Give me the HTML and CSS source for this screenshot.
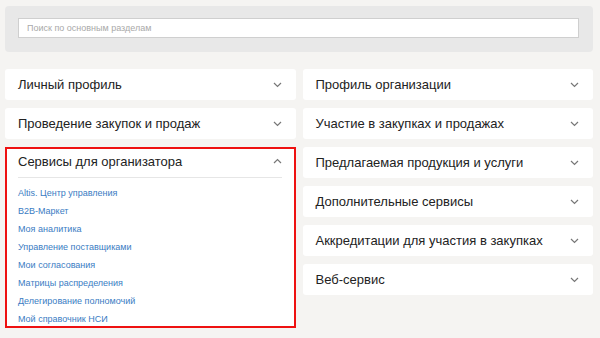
FILE: index.html
```html
<!DOCTYPE html>
<html lang="ru">
<head>
    <meta charset="UTF-8">
    <meta name="viewport" content="width=device-width, initial-scale=1.0">
    <title>Разделы</title>
    <link rel="stylesheet" href="styles.css">
</head>
<body>

    <div class="search-panel">
        <input type="text" class="search-input" placeholder="Поиск по основным разделам">
    </div>

    <main class="sections">
        <div class="column">
            <div class="card">
                <span class="card-title">Личный профиль</span>
                <svg class="chevron" width="9" height="6" viewBox="0 0 9 6"><polyline points="1,1 4.5,4.5 8,1"/></svg>
            </div>
            <div class="card">
                <span class="card-title">Проведение закупок и продаж</span>
                <svg class="chevron" width="9" height="6" viewBox="0 0 9 6"><polyline points="1,1 4.5,4.5 8,1"/></svg>
            </div>
            <div class="card card-open">
                <div class="card-head">
                    <span class="card-title">Сервисы для организатора</span>
                    <svg class="chevron" width="9" height="6" viewBox="0 0 9 6"><polyline points="1,5 4.5,1.5 8,5"/></svg>
                </div>
                <ul class="links">
                    <li><a href="#">Altis. Центр управления</a></li>
                    <li><a href="#">B2B-Маркет</a></li>
                    <li><a href="#">Моя аналитика</a></li>
                    <li><a href="#">Управление поставщиками</a></li>
                    <li><a href="#">Мои согласования</a></li>
                    <li><a href="#">Матрицы распределения</a></li>
                    <li><a href="#">Делегирование полномочий</a></li>
                    <li><a href="#">Мой справочник НСИ</a></li>
                </ul>
            </div>
        </div>

        <div class="column">
            <div class="card">
                <span class="card-title">Профиль организации</span>
                <svg class="chevron" width="9" height="6" viewBox="0 0 9 6"><polyline points="1,1 4.5,4.5 8,1"/></svg>
            </div>
            <div class="card">
                <span class="card-title">Участие в закупках и продажах</span>
                <svg class="chevron" width="9" height="6" viewBox="0 0 9 6"><polyline points="1,1 4.5,4.5 8,1"/></svg>
            </div>
            <div class="card">
                <span class="card-title">Предлагаемая продукция и услуги</span>
                <svg class="chevron" width="9" height="6" viewBox="0 0 9 6"><polyline points="1,1 4.5,4.5 8,1"/></svg>
            </div>
            <div class="card">
                <span class="card-title">Дополнительные сервисы</span>
                <svg class="chevron" width="9" height="6" viewBox="0 0 9 6"><polyline points="1,1 4.5,4.5 8,1"/></svg>
            </div>
            <div class="card">
                <span class="card-title">Аккредитации для участия в закупках</span>
                <svg class="chevron" width="9" height="6" viewBox="0 0 9 6"><polyline points="1,1 4.5,4.5 8,1"/></svg>
            </div>
            <div class="card">
                <span class="card-title">Веб-сервис</span>
                <svg class="chevron" width="9" height="6" viewBox="0 0 9 6"><polyline points="1,1 4.5,4.5 8,1"/></svg>
            </div>
        </div>
    </main>

</body>
</html>
```

FILE: styles.css
```css
:root {
    --page-bg: #f5f4f2;
    --panel-bg: #e8e8e8;
    --text-color: #222222;
    --link-color: #3a7cc3;
    --line-color: #e6e6e6;
    --highlight: #ee1111;
    --font-family: 'Liberation Sans', Arial, sans-serif;
}
body {
    font-family: var(--font-family);
    background-color: var(--page-bg);
    color: var(--text-color);
    margin: 0;
    padding: 6px 7px 0 5px;
}
.search-panel {
    background-color: var(--panel-bg);
    border-radius: 4px;
    padding: 12px 14px 14px 13px;
}
.search-input {
    display: block;
    width: 100%;
    height: 20px;
    box-sizing: border-box;
    border: 1px solid #cfcfcf;
    background: #ffffff;
    padding: 0 8px;
    font-family: var(--font-family);
    font-size: 9px;
    color: var(--text-color);
    outline: none;
}
.search-input::placeholder {
    color: #a9a9a9;
}
.sections {
    display: grid;
    grid-template-columns: 1fr 1fr;
    gap: 7px;
    margin-top: 17px;
}
.column {
    display: flex;
    flex-direction: column;
    gap: 8px;
}
.card {
    background: #ffffff;
    border-radius: 3px;
    height: 31px;
    box-sizing: border-box;
    padding: 0 14px 0 13px;
    display: flex;
    align-items: center;
    justify-content: space-between;
}
.card-title {
    font-size: 13px;
}
.chevron {
    fill: none;
    stroke: #777777;
    stroke-width: 1.2;
}
.card-open {
    height: auto;
    display: block;
    border: 2px solid var(--highlight);
    border-radius: 0;
    padding: 0 12px 0 11px;
}
.card-head {
    height: 24px;
    display: flex;
    align-items: center;
    justify-content: space-between;
    border-bottom: 1px solid var(--line-color);
    padding-bottom: 4px;
}
.links {
    list-style: none;
    margin: 0;
    padding: 4px 0 0;
}
.links li {
    height: 18px;
    line-height: 17px;
}
.links a {
    color: var(--link-color);
    font-size: 9px;
    text-decoration: none;
}
.links a:hover {
    text-decoration: underline;
}
```
